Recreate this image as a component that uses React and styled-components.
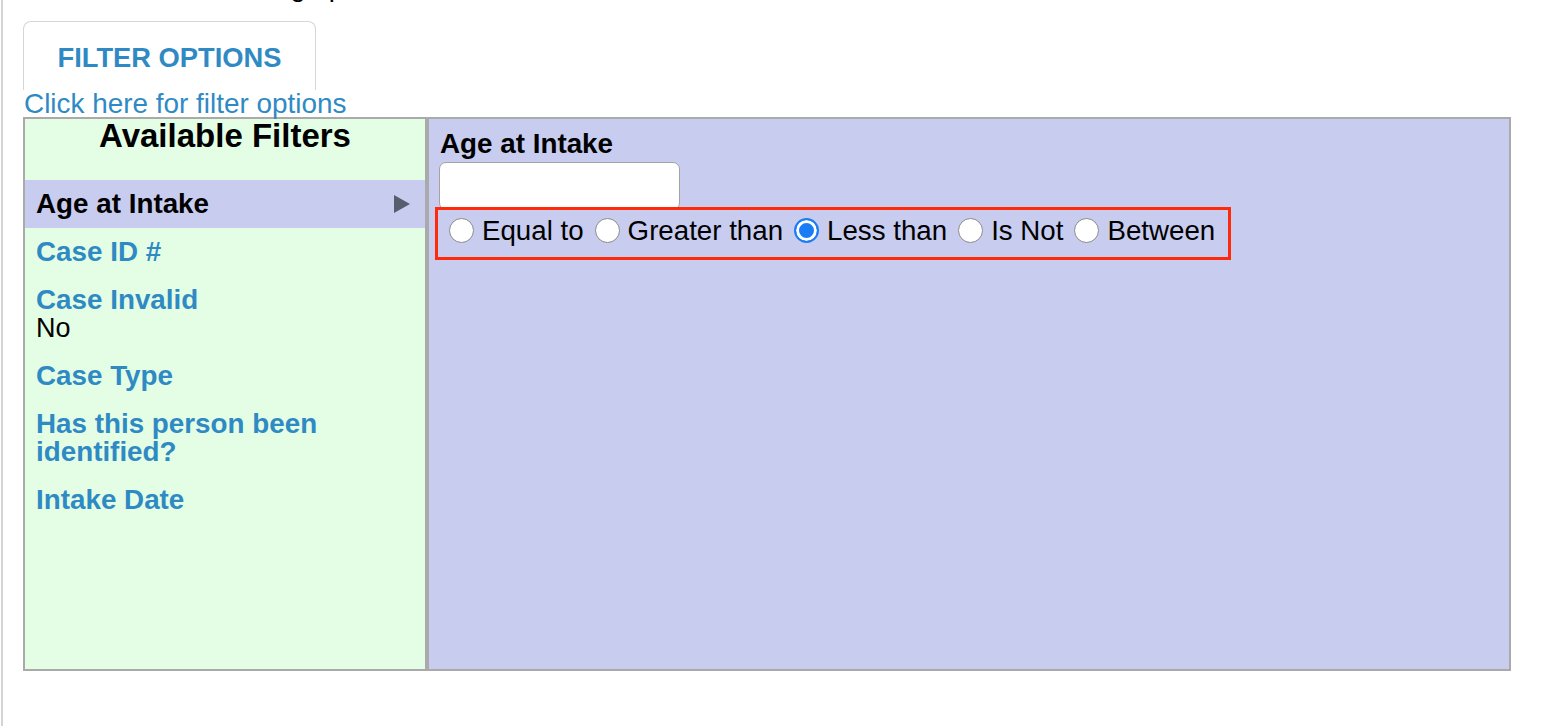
import React from "react";
import styled, { createGlobalStyle } from "styled-components";

const Global = createGlobalStyle`
  html, body { margin: 0; padding: 0; background: #fff; }
  body { font-family: "Liberation Sans", Arial, Helvetica, sans-serif; color: #000; overflow: hidden; }
`;

const Page = styled.div`
  display: flow-root;
  min-height: 726px;
  border-left: 2px solid #d4d4d4;
  margin-left: 1px;
  padding-left: 20px;
  box-sizing: border-box;
`;

const Intro = styled.div`
  font-size: 27.7px;
  line-height: 32px;
  margin-top: -29px;
  white-space: nowrap;
  padding-left: 1px;
`;

const Tab = styled.div`
  margin-top: 18px;
  width: 293px;
  height: 69px;
  box-sizing: border-box;
  border: 1.5px solid #d6d6d6;
  border-bottom: none;
  border-radius: 8px 8px 0 0;
  display: flex;
  align-items: center;
  justify-content: center;
  padding-top: 4px;
  font-weight: 700;
  font-size: 27.3px;
  color: #2f8ac4;
`;

const Link = styled.a`
  display: block;
  font-size: 27.9px;
  line-height: 27px;
  color: #2f8ac4;
  text-decoration: none;
  padding-left: 1px;
  cursor: pointer;
`;

const Panel = styled.div`
  display: flex;
  width: 1488px;
  height: 554px;
  box-sizing: border-box;
  border: 2px solid #aaaaaa;
`;

const Sidebar = styled.div`
  width: 400px;
  flex: none;
  background: #e3fee4;
  border-right: 4px solid #aaaaaa;
`;

const SideTitle = styled.div`
  font-weight: 700;
  font-size: 33px;
  line-height: 33px;
  text-align: center;
  margin-bottom: 28px;
`;

const FilterItem = styled.div`
  display: flex;
  align-items: center;
  justify-content: space-between;
  padding: 10px 14px 10px 11px;
  background: ${(p) => (p.$active ? "#c8cdf0" : "transparent")};
  cursor: pointer;
`;

const ItemText = styled.div`
  font-size: 27.8px;
  line-height: 28px;
`;

const ItemName = styled.div`
  font-weight: 700;
  color: ${(p) => (p.$active ? "#000" : "#2f8ac4")};
  width: 330px;
`;

const ItemValue = styled.div`
  font-weight: 400;
  color: #000;
  font-size: 27px;
`;

const Main = styled.div`
  flex: 1;
  background: #c8cdf0;
  padding: 9px 11px;
`;

const FieldLabel = styled.div`
  font-weight: 700;
  font-size: 27.8px;
  line-height: 32px;
`;

const TextBox = styled.input`
  display: block;
  margin: 2px 0 0 -1px;
  width: 241px;
  height: 48px;
  box-sizing: border-box;
  border: 1.5px solid #a3a3a3;
  border-radius: 7px;
  background: #fff;
  outline: none;
`;

const RadioGroup = styled.div`
  display: inline-flex;
  align-items: center;
  margin-left: -2px;
  height: 47px;
  box-sizing: border-box;
  padding: 0 13px 6px 11px;
  outline: 3.5px solid #ff2a0a;
`;

const RadioLabel = styled.label`
  display: inline-flex;
  align-items: center;
  font-size: 27.7px;
  margin-right: 11px;
  &:last-child { margin-right: 0; }
`;

const Radio = styled.input.attrs({ type: "radio" })`
  appearance: none;
  -webkit-appearance: none;
  margin: 0 8px 0 0;
  width: 25px;
  height: 25px;
  box-sizing: border-box;
  border-radius: 50%;
  border: 1.5px solid #8a8a8a;
  background: #fff;
  &:checked {
    border: 2px solid #1a7df6;
    background: #1a7df6;
    box-shadow: inset 0 0 0 3px #fff;
  }
`;

const Arrow = () => (
  <svg width="18" height="20" viewBox="0 0 18 20">
    <path d="M1 1 L17 10 L1 19 Z" fill="#575c6e" />
  </svg>
);

const filters = [
  { name: "Age at Intake", active: true },
  { name: "Case ID #" },
  { name: "Case Invalid", value: "No" },
  { name: "Case Type" },
  { name: "Has this person been identified?" },
  { name: "Intake Date" },
];

const options = ["Equal to", "Greater than", "Less than", "Is Not", "Between"];

export default function App() {
  return (
    <>
      <Global />
      <Page>
        <Intro>Click the tab for setting up filters</Intro>
        <Tab>FILTER OPTIONS</Tab>
        <Link>Click here for filter options</Link>
        <Panel>
          <Sidebar>
            <SideTitle>Available Filters</SideTitle>
            {filters.map((f) => (
              <FilterItem key={f.name} $active={f.active}>
                <ItemText>
                  <ItemName $active={f.active}>{f.name}</ItemName>
                  {f.value && <ItemValue>{f.value}</ItemValue>}
                </ItemText>
                {f.active && <Arrow />}
              </FilterItem>
            ))}
          </Sidebar>
          <Main>
            <FieldLabel>Age at Intake</FieldLabel>
            <TextBox type="text" />
            <RadioGroup>
              {options.map((o) => (
                <RadioLabel key={o}>
                  <Radio name="op" defaultChecked={o === "Less than"} />
                  {o}
                </RadioLabel>
              ))}
            </RadioGroup>
          </Main>
        </Panel>
      </Page>
    </>
  );
}
